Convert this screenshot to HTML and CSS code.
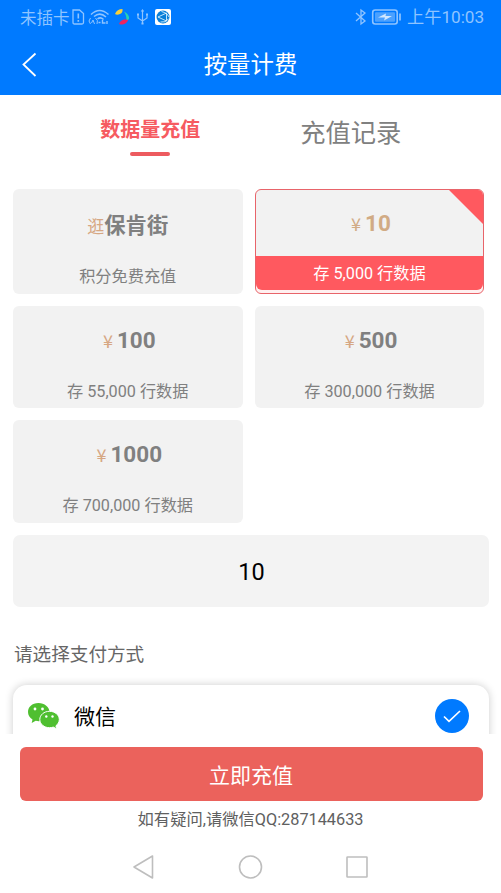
FILE: index.html
```html
<!DOCTYPE html>
<html lang="zh-CN">
<head>
<meta charset="utf-8">
<title>按量计费</title>
<link rel="stylesheet" href="styles.css">
</head>
<body>
<header class="header">
  <div class="status">
    <span class="carrier">未插卡</span>
    <svg class="status-icons" width="104" height="20" viewBox="0 0 104 20" fill="none" stroke="#8fc4ff" stroke-width="1.3">
      <path d="M4 3H10.500l4 3.500V15.500Q14.500 17 13 17H5.500Q4 17 4 15.500Z"/>
      <path d="M9.300 6.500v5M9.300 13v1.800" stroke-width="1.600"/>
      <path d="M22 7.500Q30.500 -.5 39.500 7.500M25 9.500Q31 4.500 37 10M28.500 12Q31.500 9.500 34.500 12.500" stroke-width="1.500"/>
      <path d="M21.500 17Q18.500 14 21.500 11M22.500 16L24 13L25.500 17M26.500 11Q29.500 13 28 17" stroke-width="1"/>
      <path d="M29.500 15.500h2M33.500 13v3h3M38 14v3" stroke-width="1.400"/>
      <path d="M46 7Q48 2 53.500 2Q54 6 51 7Q48 8.500 46 7Z" fill="#f7cf39" stroke="none"/>
      <path d="M55 4.500Q60.500 7 60 12L57.500 14Q57.500 8 55 4.500Z" fill="#27d0b4" stroke="none"/>
      <path d="M50 17Q51 13.500 55 12.500Q59 12 59 13.500Q56 19 50 17Z" fill="#ed2461" stroke="none"/>
      <path d="M73.500 3v14M69 7v4l4.500 3 4.500-3V7" stroke-width="1.200"/>
      <path d="M71.800 4.500L73.500 2l1.700 2.500ZM68 6.500h2v2h-2ZM77 6.500h2v2h-2ZM72.500 15.500h2v2h-2Z" fill="#8fc4ff" stroke="none"/>
      <rect x="86" y="2" width="16" height="16" rx="2" fill="#fff" stroke="none"/>
      <circle cx="94" cy="10" r="6.500" fill="#087fd8" stroke="none"/>
      <path d="M89 10L97.500 6V14ZM92.500 4.500Q98.500 6 100 10M91.500 15Q96.500 16 99.500 12" stroke="#d8f0ff" stroke-width=".9"/>
    </svg>
    <svg class="power-icons" width="50" height="20" viewBox="0 0 50 20" fill="none" stroke="#8fc4ff" stroke-width="1.300">
      <path d="M2 6l9 8-4 3V3l4 3-9 8"/>
      <rect x="18.700" y="3" width="24.500" height="14" rx="2.500" stroke-width="1.600"/>
      <rect x="21" y="5.300" width="20" height="9.400" rx="1" fill="#4ba1ff" stroke="none"/>
      <path d="M24 10.500L32 6.500L31.500 9H38L30 13.500L31 10.500Z" fill="#d2e8ff" stroke="none"/>
      <path d="M46 6.500v7" stroke-width="1.700"/>
    </svg>
    <span class="clock">上午10:03</span>
  </div>
  <div class="title-bar">
    <svg class="back" width="16" height="26" viewBox="0 0 16 26" fill="none" stroke="#fff" stroke-width="1.800"><path d="M14.500 1.500L2.500 12.500L14.500 24"/></svg>
    <h1 class="title">按量计费</h1>
  </div>
</header>
<main class="content">
  <nav class="tabs">
    <div class="tab tab-active">数据量充值</div>
    <div class="tab">充值记录</div>
  </nav>
  <section class="plans">
    <article class="plan plan-first"><div class="price"><span class="prefix prefix-word">逛</span><b class="word">保肯街</b></div><div class="note">积分免费充值</div></article>
    <article class="plan plan-selected"><div class="price"><span class="prefix">¥</span><b>10</b></div><div class="note">存 5,000 行数据</div></article>
    <article class="plan"><div class="price"><span class="prefix">¥</span><b>100</b></div><div class="note">存 55,000 行数据</div></article>
    <article class="plan"><div class="price"><span class="prefix">¥</span><b>500</b></div><div class="note">存 300,000 行数据</div></article>
    <article class="plan"><div class="price"><span class="prefix">¥</span><b>1000</b></div><div class="note">存 700,000 行数据</div></article>
  </section>
  <div class="amount">10</div>
  <h2 class="pay-label">请选择支付方式</h2>
  <div class="pay-clip">
    <div class="pay-card">
      <svg width="33" height="28" viewBox="0 0 33 28">
        <path d="M11.500 1C5 1 1 5 1 10c0 3.200 1.700 5.800 4.500 7.400L4.700 21l4-2.200q2 .5 4.500.3C18 19 22.500 15 22.500 10S17.500 1 11.500 1Z" fill="#4fbf30"/>
        <path d="M22.500 9.300c-5.400 0-9.700 3.600-9.700 8.200s4.300 8.200 9.700 8.200q2 0 3.800-.6l3.400 1.800-.8-3.100c2-1.500 3.400-3.700 3.400-6.300 0-4.600-4.400-8.200-9.800-8.200Z" fill="#4fbf30" stroke="#fff" stroke-width="1"/>
        <g fill="#fff"><circle cx="8" cy="7" r="1.400"/><circle cx="15.500" cy="7" r="1.400"/><circle cx="19.300" cy="14.500" r="1.200"/><circle cx="25.500" cy="14.500" r="1.200"/></g>
      </svg>
      <span class="pay-name">微信</span>
      <svg width="34" height="34" viewBox="0 0 34 34"><circle cx="17" cy="17" r="17" fill="#007aff"/><path d="M9 17.500L14 22.300L25 12" fill="none" stroke="#fff" stroke-width="1.700"/></svg>
    </div>
  </div>
</main>
<footer class="footer">
  <div class="submit">立即充值</div>
  <p class="help">如有疑问,请微信QQ:287144633</p>
  <svg class="system-nav" width="236" height="26" viewBox="0 0 236 26" fill="none" stroke="#bebebe" stroke-width="1.600" stroke-linejoin="round">
    <path d="M2 13L20.500 2V24Z"/><circle cx="118.500" cy="13" r="11"/><rect x="215" y="3" width="20" height="20" rx=".5"/>
  </svg>
</footer>
</body>
</html>
```
FILE: styles.css
```css
* { box-sizing: border-box; }
body {
  margin: 0;
  width: 501px;
  height: 893px;
  overflow: hidden;
  background: #fff;
  color: #808080;
  font-family: "Noto Sans CJK SC", sans-serif;
}
h1, h2, p { margin: 0; font-weight: 400; }
svg { display: block; flex: none; }
.header { height: 95px; background: #007aff; color: #fff; }
.status {
  display: flex;
  align-items: center;
  height: 34px;
  padding: 0 16px 0 20px;
  color: #8fc4ff;
  font-size: 16.5px;
  line-height: 34px;
}
.status-icons { margin-left: -1px; }
.power-icons { margin-left: auto; }
.clock { width: 78px; margin-left: 3px; font-family: Roboto, "Noto Sans CJK SC", sans-serif; font-size: 17.2px; line-height: 36px; white-space: nowrap; }
.title-bar {
  display: grid;
  grid-template-columns: 22px 1fr 22px;
  align-items: center;
  height: 61px;
  padding: 0 21px;
}
.title { height: 61px; font-size: 23.4px; line-height: 58px; text-align: center; }
.content { height: 639px; }
.tabs { display: flex; height: 94px; padding: 0 50px; }
.tab { width: 201px; padding-top: 16px; font-size: 25.3px; line-height: 40px; text-align: center; }
.tab-active { padding-top: 14px; color: #f65b61; font-size: 20px; font-weight: 700; }
.tab-active::after {
  display: block;
  width: 40px;
  height: 4px;
  margin: 3px auto 0;
  border-radius: 2px;
  background: #ed5b5f;
  content: "";
}
.plans {
  display: grid;
  grid-template-columns: 229.5px 229px;
  grid-template-rows: 105px 102px 102.5px;
  gap: 12px 12.5px;
  padding-left: 13px;
}
.plan { border-radius: 6px; background: #f2f2f2; text-align: center; }
.price { height: 68px; padding-left: 3px; font-size: 22px; line-height: 64px; white-space: nowrap; }
.price b { font-family: Roboto, "Noto Sans CJK SC", sans-serif; font-size: 22.5px; font-weight: 700; }
.price .word { font-family: inherit; font-size: 21.3px; }
.prefix { margin-right: 4px; color: #d6a783; font-size: 18px; }
.prefix-word { margin-right: 0; font-size: 17px; }
.note {
  height: 34px;
  font-family: Roboto, "Noto Sans CJK SC", sans-serif;
  font-size: 16.2px;
  line-height: 35px;
  white-space: nowrap;
}
.plan-first .price { height: 70px; padding-left: 0; line-height: 69px; }
.plan-selected {
  position: relative;
  overflow: hidden;
  border: 1px solid #e8646a;
  background: linear-gradient(#f2f2f2 0 80px, #fff0f0 80px);
}
.plan-selected::after {
  position: absolute;
  top: 0;
  right: 0;
  width: 34px;
  height: 34px;
  background: #ff595f;
  clip-path: polygon(0 0, 100% 0, 100% 100%);
  content: "";
}
.plan-selected .price { height: 66px; color: #d1ab85; line-height: 62px; }
.plan-selected .price .prefix { color: #d1ab85; }
.plan-selected .note { border-radius: 0 0 6px 6px; background: #ff595f; color: #fff; line-height: 36px; }
.amount {
  width: 476px;
  height: 72px;
  margin: 12px 0 0 13px;
  padding-left: 1px;
  border-radius: 7px;
  background: #f3f3f3;
  color: #000;
  font-family: Roboto, sans-serif;
  font-size: 23.5px;
  line-height: 75px;
  text-align: center;
}
.pay-label { height: 66px; padding: 28px 0 0 14px; color: #666; font-size: 18.6px; line-height: 36px; }
.pay-clip { height: 61px; padding: 12px 12px 0 13px; overflow: hidden; }
.pay-card {
  display: flex;
  align-items: center;
  height: 100px;
  padding: 0 20px 38px 14px;
  border-radius: 14px;
  background: #fff;
  box-shadow: 0 0 9px rgba(0, 0, 0, .2);
}
.pay-name { margin: -2px auto 0 14px; color: #000; font-size: 21px; line-height: 38px; }
.footer { display: flex; flex-direction: column; align-items: center; padding-top: 13px; }
.submit {
  width: 463px;
  height: 54px;
  margin-left: 1px;
  border-radius: 6px;
  background: #eb625c;
  color: #fff;
  font-size: 21px;
  line-height: 54px;
  text-align: center;
}
.help { height: 53px; color: #606060; font-family: Roboto, "Noto Sans CJK SC", sans-serif; font-size: 16.3px; line-height: 37px; }
.system-nav { margin-left: -1px; }
```
